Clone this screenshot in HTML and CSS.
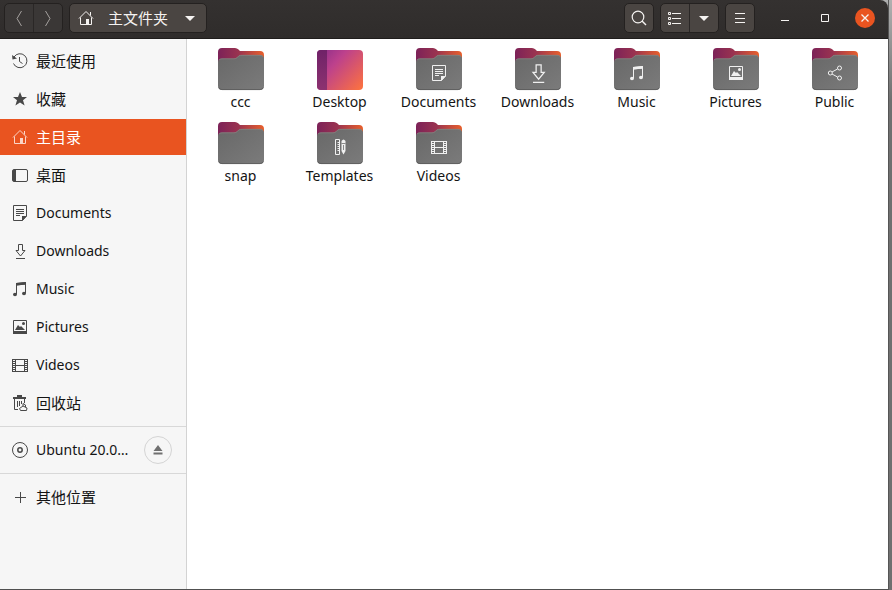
FILE: index.html
```html
<!DOCTYPE html>
<html lang="zh-CN">
<head>
<meta charset="utf-8">
<title>主文件夹</title>
<link rel="stylesheet" href="styles.css">
</head>
<body>
<svg class="defs" aria-hidden="true">
  <defs>
    <linearGradient id="back" x1="0" x2="1" y1="0" y2="0"><stop offset="0" stop-color="#7c2258"/><stop offset=".45" stop-color="#9a3350"/><stop offset="1" stop-color="#e8602c"/></linearGradient>
    <linearGradient id="front" x1="0" x2="1" y1="0" y2="1"><stop offset="0" stop-color="#686868"/><stop offset="1" stop-color="#7b7b7b"/></linearGradient>
    <linearGradient id="desk" x1="0" x2="1" y1="0.1" y2="0.9"><stop offset="0" stop-color="#8f2f8a"/><stop offset=".35" stop-color="#bd418c"/><stop offset="1" stop-color="#fa7042"/></linearGradient>
    <linearGradient id="deskside" x1="0" x2="0" y1="0" y2="1"><stop offset="0" stop-color="#702268"/><stop offset="1" stop-color="#8c3270"/></linearGradient>
  </defs>
  <symbol id="folder" viewBox="0 0 46 43">
    <path fill="url(#back)" d="M0 4Q0 0 4 0H17Q19 0 20.500 1.500L22 3H42Q46 3 46 7V20H0Z"/>
    <path fill="url(#front)" d="M0 14Q0 10.500 4 10.500H16Q18 10.500 19.500 9L21 7.500Q22 7 24 7H42Q46 7 46 10.500V38Q46 42 42 42H4Q0 42 0 38Z"/>
    <path fill="none" stroke="#8b8784" stroke-width=".7" d="M1 12Q2 10.800 4 10.800H16Q18 10.800 19.500 9.300L21 7.800Q22 7.300 24 7.300H42Q44 7.300 45 8.500"/>
    <path fill="none" stroke="#555" stroke-width=".7" d="M.8 39.500Q1.500 41.600 4 41.600H42Q44.500 41.600 45.200 39.500"/>
  </symbol>
  <symbol id="desktop-folder" viewBox="0 0 46 43">
    <rect y="2" width="46" height="40" rx="4" fill="url(#desk)"/>
    <path fill="url(#deskside)" d="M10 2H4Q0 2 0 6V38Q0 42 4 42H10Z"/>
  </symbol>
  <symbol id="home" viewBox="0 0 16 16"><path fill="none" stroke="currentColor" d="M1 8.500L8 1.500L15 8.500M2.500 7.500V14.500H13.500V7.500M12.500 2V5.500"/><path fill="currentColor" d="M8 9H11V15H8Z"/></symbol>
  <symbol id="recent" viewBox="0 0 16 16"><path fill="none" stroke="currentColor" d="M2 4A7 7 0 1 1 1.500 10.500M7.500 4V8.500L10.500 10.500"/><path fill="currentColor" d="M0 2L5 5.500L.5 6.500Z"/></symbol>
  <symbol id="star" viewBox="0 0 16 16"><path fill="currentColor" d="M8 1L10 6H15L11 9.300L12.600 14.500L8 11.400L3.400 14.500L5 9.300L1 6H6Z"/></symbol>
  <symbol id="desktop" viewBox="0 0 16 16"><rect x=".5" y="2.500" width="15" height="12" rx="1.500" fill="none" stroke="currentColor"/><path fill="currentColor" d="M1 3H4V14H1Z"/></symbol>
  <symbol id="doc" viewBox="0 0 16 16"><path fill="none" stroke="currentColor" d="M1.500.5H14.500V11L10.500 15.500H1.500ZM4 4.500H12M4 6.500H12M4 8.500H12M4 10.500H8"/><path fill="currentColor" d="M10 11H15L10 16Z"/></symbol>
  <symbol id="down" viewBox="0 0 16 16"><path fill="none" stroke="currentColor" d="M6.500 1.500H10.500V7.500H13L8.500 13L4 7.500H6.500ZM4 15.500H13"/></symbol>
  <symbol id="music" viewBox="0 0 16 16"><path fill="none" stroke="currentColor" d="M4.500 13V2.500L13.500 1.500V12M4.500 4L13.500 3"/><path fill="currentColor" d="M4 2L14 1V3.500L4 4.500Z"/><ellipse cx="3" cy="13.500" rx="2" ry="1.800" fill="currentColor"/><ellipse cx="12" cy="12.500" rx="2" ry="1.800" fill="currentColor"/></symbol>
  <symbol id="pic" viewBox="0 0 16 16"><path fill="none" stroke="currentColor" d="M1.500 1.500H14.500V14.500H1.500Z"/><path fill="currentColor" d="M1 12H15V15H1ZM3 11L6 6L8 8L9 7L13 11Z"/><circle cx="11.500" cy="4.500" r="1.500" fill="currentColor"/></symbol>
  <symbol id="video" viewBox="0 0 16 16"><path fill="none" stroke="currentColor" d="M3.500 2V15M12.500 2V15M3.500 2.500H12.500M3.500 8.500H12.500M3.500 14.500H12.500M.5 2V15M15.500 2V15"/><path fill="none" stroke="currentColor" stroke-width="3" stroke-dasharray="1 1" d="M2 2V15M14 2V15"/></symbol>
  <symbol id="trash" viewBox="0 0 16 16"><path fill="currentColor" d="M5 0H10V2H14V4H1V2H5Z"/><path fill="none" stroke="currentColor" d="M2.500 4V14.500H6M12.500 4V8M5.500 6V12M7.500 6V11M9.500 6V9M8.500 15.500L7.500 13.500L11 11L15 13L14.500 15.500ZM11 11V8.500L13.500 10V12"/></symbol>
  <symbol id="disc" viewBox="0 0 16 16"><circle cx="8" cy="8" r="7.500" fill="none" stroke="currentColor"/><circle cx="8" cy="8" r="2.200" fill="none" stroke="currentColor" stroke-width="1.500"/></symbol>
  <symbol id="plus" viewBox="0 0 16 16"><path fill="none" stroke="currentColor" d="M8.500 3V14M3 8.500H14"/></symbol>
  <symbol id="eject" viewBox="0 0 16 16"><path fill="currentColor" d="M8 3L12.500 9H3.500ZM3.500 10.500H12.500V12.500H3.500Z"/></symbol>
  <symbol id="share" viewBox="0 0 16 16"><path fill="none" stroke="currentColor" d="M5 7L10.500 4M5 9L10.500 12"/><g fill="none" stroke="currentColor"><circle cx="3.300" cy="8" r="2"/><circle cx="12.500" cy="3" r="2"/><circle cx="12.500" cy="13" r="2"/></g></symbol>
  <symbol id="template" viewBox="0 0 16 16"><path fill="none" stroke="currentColor" d="M3.500.5H7.500V15.500H3.500ZM5.500 3.500H8M5.500 5.500H8M5.500 7.500H8M5.500 9.500H8M5.500 11.500H8"/><path fill="currentColor" d="M9.500 2Q11.500-1 13.500 2V12L11.500 15.500L9.500 12Z"/><path stroke="#707070" stroke-width=".8" d="M9.500 4.500H13.500M11.500 6V11"/></symbol>
  <symbol id="prev" viewBox="0 0 16 16"><path fill="none" stroke="currentColor" d="M10.500 1L6 8.500L10.500 16"/></symbol>
  <symbol id="next" viewBox="0 0 16 16"><path fill="none" stroke="currentColor" d="M5.500 1L10 8.500L5.500 16"/></symbol>
  <symbol id="caret" viewBox="0 0 16 16"><path fill="currentColor" d="M3 6H13L8 11Z"/></symbol>
  <symbol id="search" viewBox="0 0 16 16"><circle cx="7" cy="7" r="5.800" fill="none" stroke="currentColor" stroke-width="1.200"/><path stroke="currentColor" stroke-width="1.500" d="M11 11L15 15"/></symbol>
  <symbol id="list" viewBox="0 0 16 16"><path fill="none" stroke="currentColor" d="M1.500 2.500H3.500V4.500H1.500ZM1.500 7.500H3.500V9.500H1.500ZM1.500 12.500H3.500V14.500H1.500ZM5 3.500H14M5 8.500H14M5 13.500H14"/></symbol>
  <symbol id="menu" viewBox="0 0 16 16"><path stroke="currentColor" d="M3 3.500H13M3 8.500H13M3 12.500H13"/></symbol>
  <symbol id="min" viewBox="0 0 16 16"><path stroke="currentColor" d="M4 10.500H12"/></symbol>
  <symbol id="max" viewBox="0 0 16 16"><path fill="none" stroke="currentColor" d="M4.500 4.500H11.500V11.500H4.500Z"/></symbol>
  <symbol id="close" viewBox="0 0 16 16"><path stroke="currentColor" stroke-width="1.300" d="M4.500 4.500L11.500 11.500M11.500 4.500L4.500 11.500"/></symbol>
</svg>
<div class="window">
  <header class="titlebar">
    <div class="group nav">
      <button aria-label="后退"><svg class="icon"><use href="#prev"/></svg></button>
      <button aria-label="前进"><svg class="icon"><use href="#next"/></svg></button>
    </div>
    <div class="group"><button class="path"><svg class="icon"><use href="#home"/></svg><span>主文件夹</span><svg class="icon"><use href="#caret"/></svg></button></div>
    <div class="tools">
      <div class="group"><button aria-label="搜索"><svg class="icon"><use href="#search"/></svg></button></div>
      <div class="group">
        <button aria-label="列表视图"><svg class="icon"><use href="#list"/></svg></button>
        <button aria-label="视图选项"><svg class="icon"><use href="#caret"/></svg></button>
      </div>
      <div class="group"><button aria-label="菜单"><svg class="icon"><use href="#menu"/></svg></button></div>
    </div>
    <div class="controls">
      <button aria-label="最小化"><svg class="icon"><use href="#min"/></svg></button>
      <button aria-label="最大化"><svg class="icon"><use href="#max"/></svg></button>
      <button class="close" aria-label="关闭"><svg class="icon"><use href="#close"/></svg></button>
    </div>
  </header>
  <div class="body">
    <nav class="sidebar">
      <div class="section">
        <a href="#"><svg class="icon"><use href="#recent"/></svg><span>最近使用</span></a>
        <a href="#"><svg class="icon"><use href="#star"/></svg><span>收藏</span></a>
        <a href="#" class="active" aria-current="page"><svg class="icon"><use href="#home"/></svg><span>主目录</span></a>
        <a href="#"><svg class="icon"><use href="#desktop"/></svg><span>桌面</span></a>
        <a href="#"><svg class="icon"><use href="#doc"/></svg><span lang="en">Documents</span></a>
        <a href="#"><svg class="icon"><use href="#down"/></svg><span lang="en">Downloads</span></a>
        <a href="#"><svg class="icon"><use href="#music"/></svg><span lang="en">Music</span></a>
        <a href="#"><svg class="icon"><use href="#pic"/></svg><span lang="en">Pictures</span></a>
        <a href="#"><svg class="icon"><use href="#video"/></svg><span lang="en">Videos</span></a>
        <a href="#"><svg class="icon"><use href="#trash"/></svg><span>回收站</span></a>
      </div>
      <div class="section device">
        <a href="#"><svg class="icon"><use href="#disc"/></svg><span lang="en">Ubuntu 20.0…</span></a>
        <button class="eject" aria-label="弹出"><svg class="icon"><use href="#eject"/></svg></button>
      </div>
      <div class="section">
        <a href="#"><svg class="icon"><use href="#plus"/></svg><span>其他位置</span></a>
      </div>
    </nav>
    <main class="files" lang="en">
      <a href="#"><span class="art"><svg class="folder"><use href="#folder"/></svg></span>ccc</a>
      <a href="#"><span class="art"><svg class="folder"><use href="#desktop-folder"/></svg></span>Desktop</a>
      <a href="#"><span class="art"><svg class="folder"><use href="#folder"/></svg><svg class="icon emblem"><use href="#doc"/></svg></span>Documents</a>
      <a href="#"><span class="art"><svg class="folder"><use href="#folder"/></svg><svg class="icon emblem large"><use href="#down"/></svg></span>Downloads</a>
      <a href="#"><span class="art"><svg class="folder"><use href="#folder"/></svg><svg class="icon emblem"><use href="#music"/></svg></span>Music</a>
      <a href="#"><span class="art"><svg class="folder"><use href="#folder"/></svg><svg class="icon emblem"><use href="#pic"/></svg></span>Pictures</a>
      <a href="#"><span class="art"><svg class="folder"><use href="#folder"/></svg><svg class="icon emblem"><use href="#share"/></svg></span>Public</a>
      <a href="#"><span class="art"><svg class="folder"><use href="#folder"/></svg></span>snap</a>
      <a href="#"><span class="art"><svg class="folder"><use href="#folder"/></svg><svg class="icon emblem"><use href="#template"/></svg></span>Templates</a>
      <a href="#"><span class="art"><svg class="folder"><use href="#folder"/></svg><svg class="icon emblem"><use href="#video"/></svg></span>Videos</a>
    </main>
  </div>
</div>
</body>
</html>
```

FILE: styles.css
```css
* { box-sizing: border-box; }

body {
  margin: 0;
  min-height: 100vh;
  display: flex;
  padding-right: 4px;
  background: linear-gradient(90deg, transparent calc(100% - 4px), #555 calc(100% - 4px), #555 calc(100% - 3px), transparent calc(100% - 3px)), linear-gradient(#b0b0b0, #707070 100px);
  font: 15px/20px "Noto Sans", "Noto Sans CJK SC", sans-serif;
  color: #141414;
}

a { color: inherit; text-decoration: none; }
button { padding: 0; border: 0; background: none; color: inherit; font: inherit; }
[lang="en"] { font-size: 14px; }

.defs { position: absolute; width: 0; height: 0; }
.icon { display: block; flex: none; width: 16px; height: 16px; }

.window {
  flex: 1;
  display: flex;
  flex-direction: column;
  border-bottom: 1px solid #505050;
  border-top-right-radius: 8px;
  overflow: hidden;
}

.titlebar {
  display: flex;
  height: 39px;
  padding: 3px 13px 0 4px;
  background: linear-gradient(#343130, #2f2c2b);
  border-bottom: 1px solid #1f1d1c;
  color: #f5f3f1;
}

.group {
  display: flex;
  height: 30px;
  margin-right: 6px;
  border: 1px solid #242120;
  border-radius: 5px;
  background: #4a4542;
  overflow: hidden;
}
.group button { display: grid; place-items: center; width: 28px; }
.group button + button { width: 29px; border-left: 1px solid #2a2726; }
.nav { background: #3a3736; color: #a5a19f; }

.group .path {
  display: flex;
  align-items: center;
  gap: 14px;
  width: auto;
  padding: 0 8px;
}

.tools { display: flex; margin-left: auto; }
.controls { display: flex; align-items: center; gap: 20px; margin-left: 14px; height: 30px; }
.controls button { display: grid; place-items: center; width: 20px; height: 20px; border-radius: 50%; }
.controls .close { background: #e95420; }

.body { flex: 1; display: flex; }

.sidebar { flex: none; width: 187px; background: #f6f6f6; border-right: 1px solid #d3d3d3; }
.section { display: flex; flex-direction: column; gap: 2px; padding: 4px 0 5px; }
.section + .section { border-top: 1px solid #d8d8d8; padding-top: 5px; }
.section a {
  display: flex;
  align-items: center;
  gap: 8px;
  height: 36px;
  padding-left: 12px;
}
.section .icon { color: #484848; }
.section .active { background: #e95420; color: #fff; }
.section .active .icon { color: #fbd5c7; }

.device { flex-direction: row; align-items: center; justify-content: space-between; padding-right: 14px; }
.eject { display: grid; place-items: center; width: 28px; height: 28px; border: 1px solid #d4d4d4; border-radius: 50%; }
.section .eject .icon { color: #707070; }

.files {
  flex: 1;
  display: grid;
  grid-template-columns: repeat(auto-fill, minmax(98px, 1fr));
  grid-auto-rows: 74px;
  align-content: start;
  padding: 9px 4px;
  background: #fff;
}
.files a { display: flex; flex-direction: column; align-items: center; gap: 1px; }
.art { display: grid; place-items: center; }
.art > svg { grid-area: 1 / 1; }
.folder { width: 46px; height: 43px; }
.emblem { margin-top: 6px; color: #f0f0f0; }
.large { width: 20px; height: 20px; }
```
